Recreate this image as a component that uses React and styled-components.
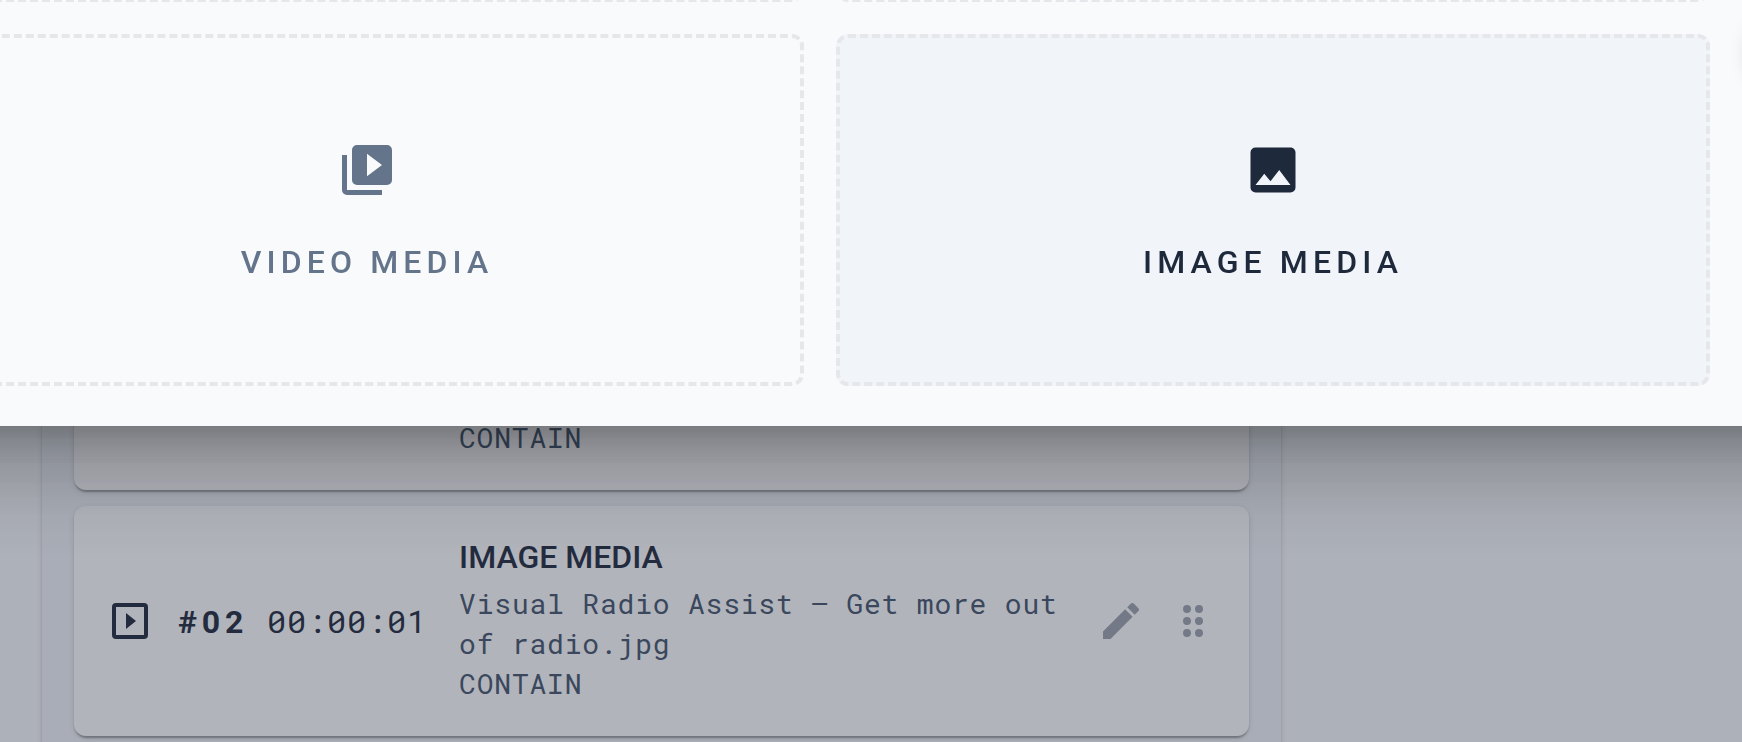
import React from 'react';
import styled, { createGlobalStyle } from 'styled-components';

const colors = {
  page: '#f8fafc',
  panel: '#f1f5f9',
  card: '#ffffff',
  dark: '#1e293b',
  text: '#42546b',
  muted: '#64748b',
  action: '#9ca3ad',
  border: '#e5e7eb',
  overlay: 'rgba(44, 49, 69, .365)',
};

const fonts = {
  base: "Roboto, 'Liberation Sans', sans-serif",
  mono: "'Roboto Mono', 'DejaVu Sans Mono', monospace",
};

const cardShadow = `
  0 4px 2px -2px rgba(0, 0, 0, .2),
  0 2px 2px 0 rgba(0, 0, 0, .14),
  0 2px 6px 0 rgba(0, 0, 0, .12)
`;

const icons = {
  videoLibrary: 'M4,6H2V20A2,2 0 0,0 4,22H18V20H4V6M20,2H8A2,2 0 0,0 6,4V16A2,2 0 0,0 8,18H20A2,2 0 0,0 22,16V4A2,2 0 0,0 20,2M12,14.5V5.5L18,10L12,14.5Z',
  image: 'M8.5,13.5L11,16.5L14.5,12L19,18H5M21,19V5C21,3.89 20.1,3 19,3H5A2,2 0 0,0 3,5V19A2,2 0 0,0 5,21H19A2,2 0 0,0 21,19Z',
  play: 'M19,19H5V5H19M19,3H5A2,2 0 0,0 3,5V19A2,2 0 0,0 5,21H19A2,2 0 0,0 21,19V5A2,2 0 0,0 19,3M10,8V16L15,12',
  pencil: 'M20.71,7.04C21.1,6.65 21.1,6 20.71,5.63L18.37,3.29C18,2.9 17.35,2.9 16.96,3.29L15.12,5.12L18.87,8.87M3,17.25V21H6.75L17.81,9.93L14.06,6.18L3,17.25Z',
  drag: 'M11,18A2,2 0 1,1 7,18A2,2 0 1,1 11,18M11,12A2,2 0 1,1 7,12A2,2 0 1,1 11,12M11,6A2,2 0 1,1 7,6A2,2 0 1,1 11,6M17,6A2,2 0 1,1 13,6A2,2 0 1,1 17,6M17,12A2,2 0 1,1 13,12A2,2 0 1,1 17,12M17,18A2,2 0 1,1 13,18A2,2 0 1,1 17,18',
};

const GlobalStyle = createGlobalStyle`
  * {
    box-sizing: border-box;
  }

  body {
    margin: 0;
    overflow: hidden;
    background: ${colors.page};
    color: ${colors.dark};
    font-family: ${fonts.base};
  }

  button {
    padding: 0;
    border: 0;
    background: none;
    color: inherit;
    font: inherit;
    cursor: pointer;
  }
`;

const Svg = styled.svg`
  display: block;
  flex: none;
  width: ${({ $size }) => $size}px;
  height: ${({ $size }) => $size}px;
  fill: currentColor;
`;

const Page = styled.main`
  display: flex;
  height: 100vh;
  padding: 0 461px 0 42px;
  overflow: hidden;
`;

const Playlist = styled.ol`
  display: flex;
  flex: 1;
  flex-direction: column;
  gap: 16px;
  height: max-content;
  min-height: 100vh;
  margin: 0;
  padding: 260px 32px 32px;
  list-style: none;

  background: ${colors.panel};
  box-shadow: ${cardShadow};
`;

const Card = styled.li`
  display: flex;
  align-items: center;
  min-height: 230px;
  padding: 32px;

  background: ${colors.card};
  border-radius: 12px;
  box-shadow: ${cardShadow};

  /* Everything in a card inherits the spacing of its 32px text */
  font-size: 32px;
  letter-spacing: .025em;
`;

const Timing = styled.div`
  display: flex;
  align-items: baseline;
  gap: 19px;
  margin-left: 24px;
  line-height: 40px;
`;

const Position = styled.strong`
  font-weight: 700;
  letter-spacing: .15em;
`;

const Duration = styled.time`
  font-family: ${fonts.mono};
`;

// Keeps the details column in line when an item has no position yet
const Spacer = styled.span`
  flex: none;
  width: 321px;
`;

const Details = styled.div`
  flex: 1;
  align-self: flex-end;
  min-width: 0;
  margin: 0 24px 0 32px;
`;

const Title = styled.h3`
  margin: 0 0 8px;
  font-size: 32px;
  font-weight: 500;
  line-height: 38px;
  letter-spacing: normal;
`;

const Meta = styled.p`
  margin: 0;
  color: ${colors.text};
  font-family: ${fonts.mono};
  font-size: 28px;
  line-height: 40px;
`;

const Actions = styled.div`
  display: flex;
  gap: 24px;
  color: ${colors.action};
`;

const Overlay = styled.div`
  position: fixed;
  inset: 0;
  overflow: hidden;
  background: ${colors.overlay};
`;

const Dialog = styled.section`
  position: relative;
  margin: -382px -160px 0;
  padding: 32px 192px 40px 90px;

  background: ${colors.page};
  box-shadow:
    0 22px 30px -14px rgba(0, 0, 0, .2),
    0 48px 76px 6px rgba(0, 0, 0, .14),
    0 18px 92px 16px rgba(0, 0, 0, .12);
`;

const TileGrid = styled.div`
  display: grid;
  grid-template-columns: 1fr 1fr;
  grid-auto-rows: 352px;
  gap: 32px;
`;

const Tile = styled.button`
  && {
    display: flex;
    flex-direction: column;
    align-items: center;
    justify-content: center;
    gap: 44px;

    background: ${({ $active }) => ($active ? colors.panel : 'transparent')};
    border: 4px dashed ${colors.border};
    border-radius: 12px;
    color: ${({ $active }) => ($active ? colors.dark : colors.muted)};
    font-size: 32px;
    font-weight: 500;
    line-height: 36px;
    letter-spacing: .16em;
  }
`;

const CloseButton = styled.button`
  && {
    position: absolute;
    right: 74px;
    bottom: 338px;
    width: 80px;
    height: 80px;

    background: ${colors.card};
    border-radius: 50%;
    box-shadow: 0 6px 20px rgba(0, 0, 0, .16);
  }
`;

const Icon = ({ name, size = 48 }) => (
  <Svg $size={size} viewBox="0 0 24 24" aria-hidden="true">
    <path d={icons[name]} />
  </Svg>
);

const items = [
  { id: 1, fit: 'CONTAIN' },
  {
    id: 2,
    position: '#02',
    duration: '00:00:01',
    title: 'IMAGE MEDIA',
    file: 'Visual Radio Assist – Get more out of radio.jpg',
    fit: 'CONTAIN',
  },
];

const PlaylistItem = ({ position, duration, title, file, fit }) => (
  <Card>
    {position ? (
      <>
        <Icon name="play" />
        <Timing>
          <Position>{position}</Position>
          <Duration>{duration}</Duration>
        </Timing>
      </>
    ) : <Spacer />}
    <Details>
      {title && <Title>{title}</Title>}
      {file && <Meta>{file}</Meta>}
      <Meta>{fit}</Meta>
    </Details>
    {position && (
      <Actions>
        <button type="button" aria-label="Edit"><Icon name="pencil" /></button>
        <button type="button" aria-label="Reorder"><Icon name="drag" /></button>
      </Actions>
    )}
  </Card>
);

const App = () => (
  <>
    <GlobalStyle />
    <Page>
      <Playlist>
        {items.map(item => <PlaylistItem key={item.id} {...item} />)}
      </Playlist>
    </Page>
    <Overlay>
      <Dialog role="dialog" aria-label="Add media">
        <TileGrid>
          <Tile type="button" aria-label="Text" />
          <Tile type="button" aria-label="Audio" />
          <Tile type="button">
            <Icon name="videoLibrary" size={60} />
            VIDEO MEDIA
          </Tile>
          <Tile type="button" $active>
            <Icon name="image" size={60} />
            IMAGE MEDIA
          </Tile>
        </TileGrid>
        <CloseButton type="button" aria-label="Close" />
      </Dialog>
    </Overlay>
  </>
);

export default App;
